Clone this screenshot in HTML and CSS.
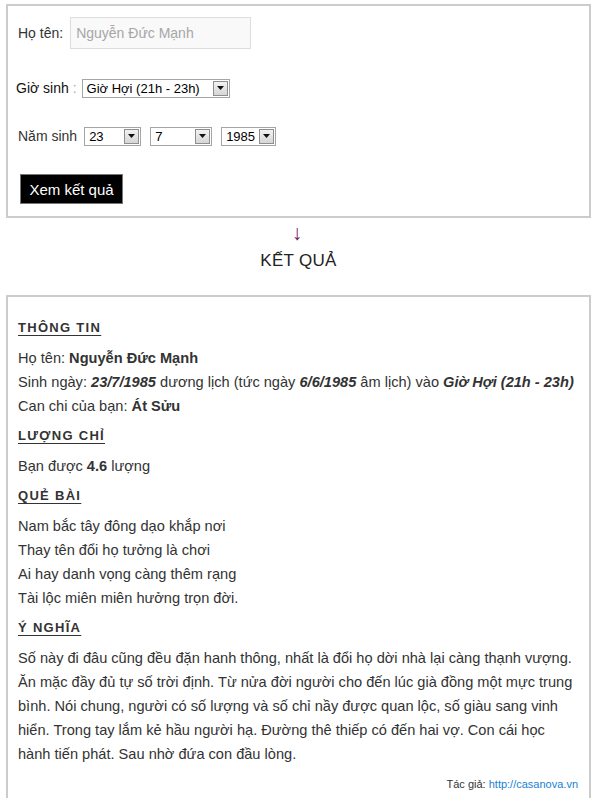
FILE: index.html
```html
<!DOCTYPE html>
<html lang="vi">
<head>
<meta charset="utf-8">
<title>Xem số chỉ lượng</title>
<link rel="stylesheet" href="styles.css">
</head>
<body>
<form class="box form-box">
  <div class="row row-name">
    <label class="lbl" for="name">Họ tên:</label>
    <input id="name" class="txt" type="text" placeholder="Nguyễn Đức Mạnh">
  </div>
  <div class="row row-hour">
    <label class="lbl lbl-hour">Giờ sinh <span class="colon">:</span></label>
    <span class="sel w-hour"><select><option>Giờ Hợi (21h - 23h)</option></select><span class="sel-btn"><svg width="7" height="4" viewBox="0 0 7 4"><path d="M0 0H7L3.5 4Z" fill="#111"/></svg></span></span>
  </div>
  <div class="row row-date">
    <label class="lbl">Năm sinh</label>
    <span class="sel w-day"><select><option>23</option></select><span class="sel-btn"><svg width="7" height="4" viewBox="0 0 7 4"><path d="M0 0H7L3.5 4Z" fill="#111"/></svg></span></span>
    <span class="sel w-month"><select><option>7</option></select><span class="sel-btn"><svg width="7" height="4" viewBox="0 0 7 4"><path d="M0 0H7L3.5 4Z" fill="#111"/></svg></span></span>
    <span class="sel w-year"><select><option>1985</option></select><span class="sel-btn"><svg width="7" height="4" viewBox="0 0 7 4"><path d="M0 0H7L3.5 4Z" fill="#111"/></svg></span></span>
  </div>
  <div class="row row-btn">
    <button type="button" class="btn">Xem kết quả</button>
  </div>
</form>

<div class="divider">
  <div class="arrow">↓</div>
  <div class="result-title">KẾT QUẢ</div>
</div>

<div class="box result-box">
  <h3 class="sec">THÔNG TIN</h3>
  <p class="line">Họ tên: <b>Nguyễn Đức Mạnh</b></p>
  <p class="line">Sinh ngày: <b><i>23/7/1985</i></b> dương lịch (tức ngày <b><i>6/6/1985</i></b> âm lịch) vào <b><i>Giờ Hợi (21h - 23h)</i></b></p>
  <p class="line">Can chi của bạn: <b>Át Sửu</b></p>
  <h3 class="sec">LƯỢNG CHỈ</h3>
  <p class="line">Bạn được <b>4.6</b> lượng</p>
  <h3 class="sec">QUẺ BÀI</h3>
  <p class="line">Nam bắc tây đông dạo khắp nơi<br>Thay tên đổi họ tưởng là chơi<br>Ai hay danh vọng càng thêm rạng<br>Tài lộc miên miên hưởng trọn đời.</p>
  <h3 class="sec">Ý NGHĨA</h3>
  <p class="line">Số này đi đâu cũng đều đặn hanh thông, nhất là đổi họ dời nhà lại càng thạnh vượng. Ăn mặc đầy đủ tự số trời định. Từ nửa đời người cho đến lúc già đồng một mực trung bình. Nói chung, người có số lượng và số chỉ nầy được quan lộc, số giàu sang vinh hiển. Trong tay lắm kẻ hầu người hạ. Đường thê thiếp có đến hai vợ. Con cái học hành tiến phát. Sau nhờ đứa con đầu lòng.</p>
  <p class="author">Tác giả: <a href="#">http://casanova.vn</a></p>
</div>
</body>
</html>
```

FILE: styles.css
```css
* { box-sizing: border-box; }

html, body { background: #fff; }

body {
  margin: 4px 10px 0 6px;
  font-family: "Liberation Sans", Arial, sans-serif;
  font-size: 14px;
  color: #333;
}

.box {
  width: 585px;
  border: 2px solid #cccccc;
  background: #fff;
}

/* ---------- form ---------- */
.form-box {
  display: flex;
  flex-direction: column;
  padding: 11px 10px 12px 10px;
}

.row {
  display: flex;
  align-items: center;
}

.lbl {
  color: #333;
  font-size: 14px;
}

.row-name { height: 32px; }
.row-name .lbl { margin-right: 7px; }

.txt {
  width: 181px;
  height: 32px;
  border: 1px solid #dddddd;
  background: #f9f9f9;
  font-family: "Liberation Sans", Arial, sans-serif;
  font-size: 14px;
  color: #333;
  padding: 0 0 0 5px;
  outline: none;
}
.txt::placeholder { color: #a6a6a6; }

.row-hour { margin-top: 29px; height: 20px; }
.lbl-hour { margin-left: -2px; margin-right: 5px; color: #111; }
.colon { color: #aaa; }

.row-date { margin-top: 28px; height: 20px; }
.row-date .lbl { margin-right: 7px; }
.row-date .sel { margin-right: 9px; }

.sel {
  display: inline-flex;
  align-items: center;
  height: 19px;
  border: 1px solid #a5a5a5;
  background: #fff;
  padding: 1px;
}
.sel select {
  -webkit-appearance: none;
  appearance: none;
  border: none;
  background: transparent;
  font-family: "Liberation Sans", Arial, sans-serif;
  font-size: 13px;
  color: #000;
  padding: 0 0 0 3px;
  margin: 0;
  height: 15px;
  line-height: 15px;
  flex: 1;
  min-width: 0;
  outline: none;
}
.sel-btn {
  flex: none;
  width: 15px;
  height: 15px;
  border: 1px solid #8e8e8e;
  background: linear-gradient(#f2f2f2, #d6d6d6);
  display: flex;
  align-items: center;
  justify-content: center;
}

.w-hour { width: 148px; }
.w-day { width: 57px; }
.w-month { width: 62px; }
.w-year { width: 55px; }

.row-btn { margin-top: 28px; }

.btn {
  margin-left: 2px;
  width: 103px;
  height: 30px;
  background: #000;
  color: #fff;
  border: 1px solid #777;
  font-family: "Liberation Sans", Arial, sans-serif;
  font-size: 15px;
  padding: 0;
  cursor: pointer;
}

/* ---------- divider ---------- */
.divider {
  width: 585px;
  display: flex;
  flex-direction: column;
  align-items: center;
  padding: 4px 0 24px;
}
.arrow {
  color: #6a1b6a;
  font-size: 21px;
  line-height: 22px;
  margin-left: -3px;
}
.result-title {
  margin-top: 7px;
  font-size: 17px;
  line-height: 20px;
  color: #222;
  letter-spacing: 0.3px;
}

/* ---------- result ---------- */
.result-box {
  padding: 13px 10px 0 10px;
  min-height: 520px;
}

.sec {
  margin: 6px 0;
  font-size: 13px;
  line-height: 24px;
  font-weight: bold;
  letter-spacing: 1.3px;
  text-decoration: underline;
  text-underline-offset: 3px;
  color: #333;
}

.line {
  margin: 0;
  line-height: 24px;
  font-size: 14.6px;
  color: #333;
}

.author {
  margin: 6px 0 0;
  text-align: right;
  font-size: 11px;
  line-height: 24px;
  padding-right: 1px;
  color: #333;
}
.author a {
  color: #1a7fd4;
  text-decoration: none;
}
```
